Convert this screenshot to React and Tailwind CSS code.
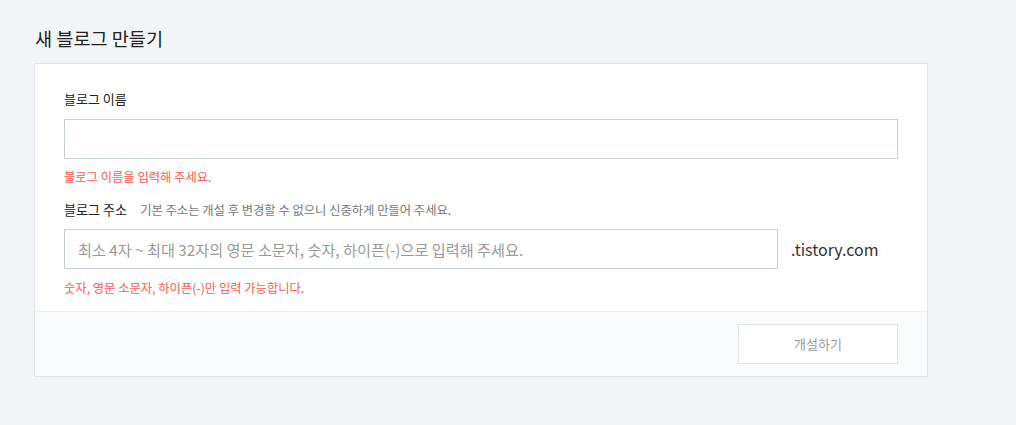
export default function App() {
    return (
        <div
            className="min-h-[425px] w-full bg-[#f3f4f6] px-[34px] pt-[24px]"
            style={{ fontFamily: '"Noto Sans CJK KR", "Noto Sans", sans-serif' }}
        >
            <h1 className="text-[18.6px] leading-[28px] font-normal text-[#222] pl-px">새 블로그 만들기</h1>

            <div className="mt-[11px] w-[894px] border border-[#e2e4ec] bg-white">
                <div className="px-[29px] pt-[26px] pb-[14px]">
                    <label className="block text-[13px] leading-[18px] text-[#222]">블로그 이름</label>
                    <input
                        type="text"
                        className="mt-[11px] block h-[40px] w-[834px] border border-[#c9cfd9] bg-white px-[14px] text-[15px] outline-none"
                    />
                    <p className="mt-[9px] text-[12.3px] leading-[18px] text-[#ff5a4a]">블로그 이름을 입력해 주세요.</p>

                    <div className="mt-[15px] flex items-baseline gap-[13px]">
                        <span className="text-[13.1px] leading-[18px] text-[#222]">블로그 주소</span>
                        <span className="text-[12.3px] leading-[18px] text-[#777]">기본 주소는 개설 후 변경할 수 없으니 신중하게 만들어 주세요.</span>
                    </div>
                    <div className="mt-[10px] flex items-center">
                        <input
                            type="text"
                            placeholder="최소 4자 ~ 최대 32자의 영문 소문자, 숫자, 하이픈(-)으로 입력해 주세요."
                            className="block h-[40px] w-[714px] border border-[#c9cfd9] bg-white px-[13px] text-[15.2px] text-[#333] placeholder:text-[#999] outline-none"
                        />
                        <span className="ml-[13px] text-[16px] text-[#333]">.tistory.com</span>
                    </div>
                    <p className="mt-[10px] text-[12.3px] leading-[18px] text-[#ff5a4a]">숫자, 영문 소문자, 하이픈(-)만 입력 가능합니다.</p>
                </div>

                <div className="flex justify-end border-t border-[#eceef3] bg-[#f9fafc] px-[29px] pt-[12px] pb-[12px]">
                    <button className="h-[40px] w-[160px] border border-[#dfe2ea] bg-white text-[13px] text-[#999]">
                        개설하기
                    </button>
                </div>
            </div>
        </div>
    );
}
